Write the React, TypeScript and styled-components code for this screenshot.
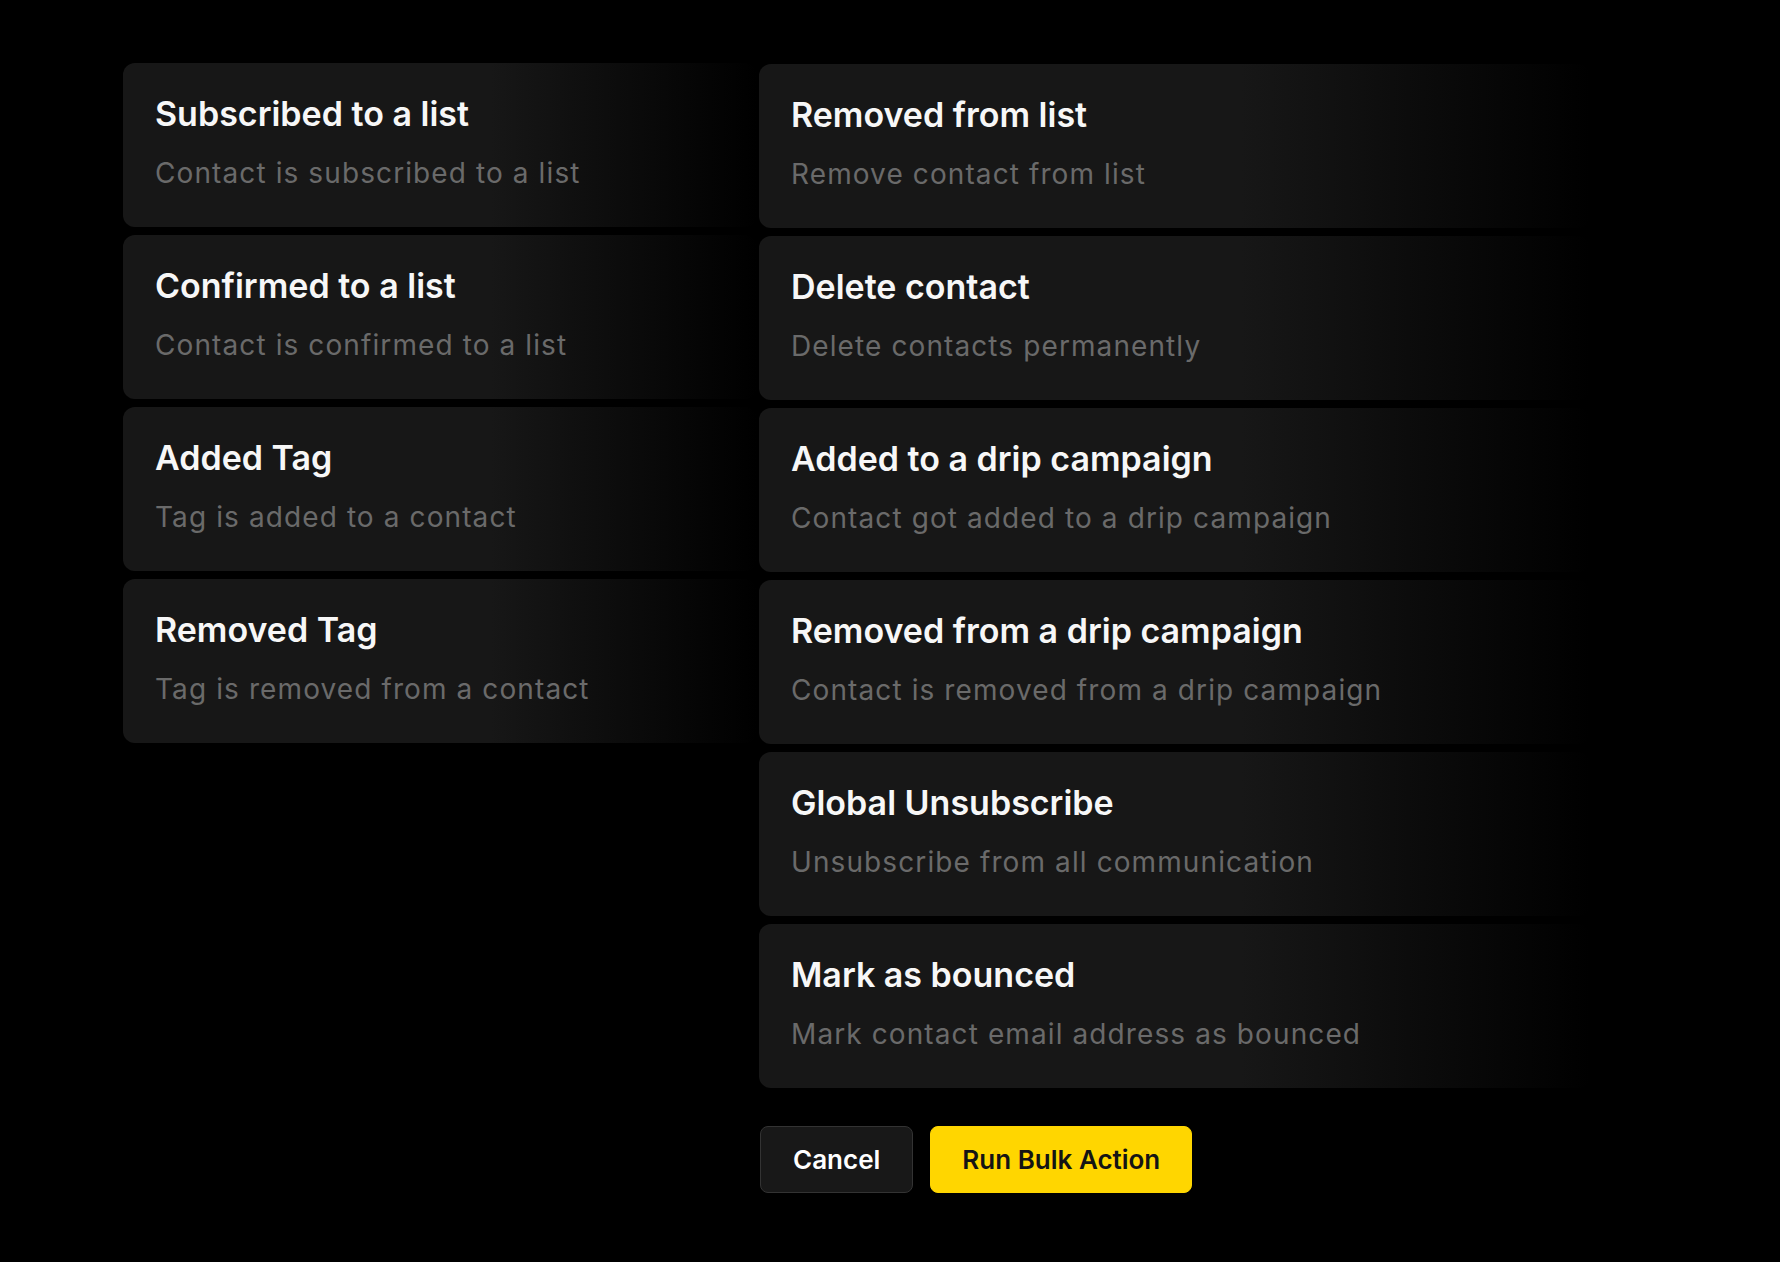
import React from 'react'
import styled, { createGlobalStyle } from 'styled-components'

const GlobalStyle = createGlobalStyle`
  html, body {
    background: #000;
    margin: 0;
    padding: 0;
  }

  body {
    font-family: Inter, 'Noto Sans', 'Liberation Sans', sans-serif;
    -webkit-font-smoothing: antialiased;
  }
`

const Page = styled.div`
  background: #000;
  box-sizing: border-box;
  min-height: 1262px;
  padding: 63px 0 0 123px;
  width: 1780px;
`

const Columns = styled.div`
  align-items: start;
  column-gap: 2px;
  display: grid;
  grid-template-columns: 634px 831px;
`

const Column = styled.div<{ $offset?: number }>`
  display: flex;
  flex-direction: column;
  gap: 8px;
  padding-top: ${props => props.$offset || 0}px;
`

const Card = styled.button`
  background: linear-gradient(90deg, #171717 0%, #171717 58%, #000 100%);
  border: none;
  border-radius: 12px;
  box-sizing: border-box;
  cursor: pointer;
  display: flex;
  flex-direction: column;
  font-family: inherit;
  height: 164px;
  padding: 31px 32px 0;
  text-align: left;
  width: 100%;
`

const Title = styled.div`
  color: #f7f7f7;
  font-size: 34px;
  font-weight: 600;
  line-height: 40px;
`

const Description = styled.div`
  color: #6a6a6a;
  font-size: 28px;
  font-weight: 400;
  letter-spacing: 1.1px;
  line-height: 34px;
  margin-top: 22px;
`

const Actions = styled.div`
  display: flex;
  gap: 17px;
  margin-top: 30px;
  padding-left: 1px;
`

const Button = styled.button<{ $primary?: boolean }>`
  background: ${props => (props.$primary ? '#ffd600' : '#181818')};
  border: 1px solid ${props => (props.$primary ? '#ffd600' : '#333')};
  border-radius: 8px;
  box-sizing: border-box;
  color: ${props => (props.$primary ? '#141414' : '#fff')};
  cursor: pointer;
  font-family: inherit;
  font-size: 26px;
  font-weight: 600;
  height: 67px;
  padding: 0 ${props => (props.$primary ? 31 : 32)}px;
`

type Action = {
  title: string
  description: string
}

const triggers: Action[] = [
  { title: 'Subscribed to a list', description: 'Contact is subscribed to a list' },
  { title: 'Confirmed to a list', description: 'Contact is confirmed to a list' },
  { title: 'Added Tag', description: 'Tag is added to a contact' },
  { title: 'Removed Tag', description: 'Tag is removed from a contact' },
]

const actions: Action[] = [
  { title: 'Removed from list', description: 'Remove contact from list' },
  { title: 'Delete contact', description: 'Delete contacts permanently' },
  { title: 'Added to a drip campaign', description: 'Contact got added to a drip campaign' },
  { title: 'Removed from a drip campaign', description: 'Contact is removed from a drip campaign' },
  { title: 'Global Unsubscribe', description: 'Unsubscribe from all communication' },
  { title: 'Mark as bounced', description: 'Mark contact email address as bounced' },
]

const ActionCard: React.FC<Action> = ({ title, description }) => (
  <Card type="button">
    <Title>{title}</Title>
    <Description>{description}</Description>
  </Card>
)

export default function App() {
  return (
    <Page>
      <GlobalStyle />
      <Columns>
        <Column>
          {triggers.map(item => (
            <ActionCard key={item.title} {...item} />
          ))}
        </Column>
        <Column $offset={1}>
          {actions.map(item => (
            <ActionCard key={item.title} {...item} />
          ))}
          <Actions>
            <Button type="button">Cancel</Button>
            <Button $primary type="button">
              Run Bulk Action
            </Button>
          </Actions>
        </Column>
      </Columns>
    </Page>
  )
}
